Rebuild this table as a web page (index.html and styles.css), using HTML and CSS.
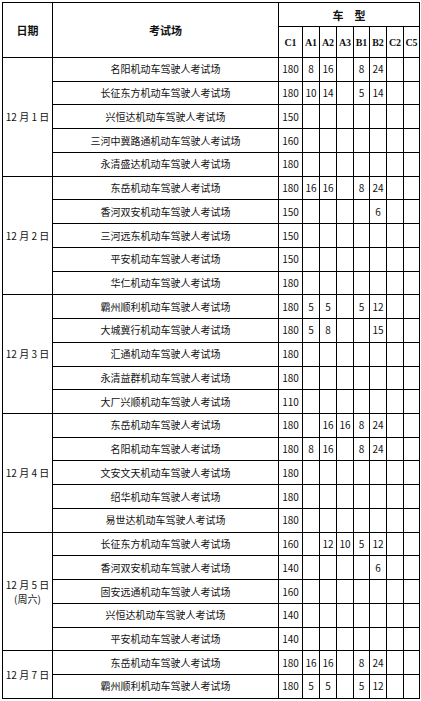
FILE: index.html
```html
<!DOCTYPE html>
<html lang="zh-CN">
<head>
<meta charset="utf-8">
<title>考试场安排</title>
<link rel="stylesheet" href="styles.css">
</head>
<body>
<table class="sched">
  <colgroup>
    <col class="c-date"><col class="c-venue"><col class="c-c1">
    <col class="c-n"><col class="c-n"><col class="c-n"><col class="c-n16"><col class="c-n"><col class="c-n"><col class="c-n16">
  </colgroup>
  <thead>
    <tr class="h1">
      <th rowspan="2" class="hz">日期</th>
      <th rowspan="2" class="hz">考试场</th>
      <th colspan="8" class="hz">车　型</th>
    </tr>
    <tr class="h2">
      <th class="code">C1</th><th class="code">A1</th><th class="code">A2</th><th class="code">A3</th><th class="code">B1</th><th class="code">B2</th><th class="code">C2</th><th class="code">C5</th>
    </tr>
  </thead>
  <tbody>
    <tr><td rowspan="5" class="date">12 月 1 日</td><td class="venue">名阳机动车驾驶人考试场</td><td>180</td><td>8</td><td>16</td><td></td><td>8</td><td>24</td><td></td><td></td></tr>
    <tr><td class="venue">长征东方机动车驾驶人考试场</td><td>180</td><td>10</td><td>14</td><td></td><td>5</td><td>14</td><td></td><td></td></tr>
    <tr><td class="venue">兴恒达机动车驾驶人考试场</td><td>150</td><td></td><td></td><td></td><td></td><td></td><td></td><td></td></tr>
    <tr><td class="venue">三河中冀路通机动车驾驶人考试场</td><td>160</td><td></td><td></td><td></td><td></td><td></td><td></td><td></td></tr>
    <tr><td class="venue">永清盛达机动车驾驶人考试场</td><td>180</td><td></td><td></td><td></td><td></td><td></td><td></td><td></td></tr>

    <tr><td rowspan="5" class="date">12 月 2 日</td><td class="venue">东岳机动车驾驶人考试场</td><td>180</td><td>16</td><td>16</td><td></td><td>8</td><td>24</td><td></td><td></td></tr>
    <tr><td class="venue">香河双安机动车驾驶人考试场</td><td>150</td><td></td><td></td><td></td><td></td><td>6</td><td></td><td></td></tr>
    <tr><td class="venue">三河远东机动车驾驶人考试场</td><td>150</td><td></td><td></td><td></td><td></td><td></td><td></td><td></td></tr>
    <tr><td class="venue">平安机动车驾驶人考试场</td><td>150</td><td></td><td></td><td></td><td></td><td></td><td></td><td></td></tr>
    <tr><td class="venue">华仁机动车驾驶人考试场</td><td>180</td><td></td><td></td><td></td><td></td><td></td><td></td><td></td></tr>

    <tr><td rowspan="5" class="date">12 月 3 日</td><td class="venue">霸州顺利机动车驾驶人考试场</td><td>180</td><td>5</td><td>5</td><td></td><td>5</td><td>12</td><td></td><td></td></tr>
    <tr><td class="venue">大城冀行机动车驾驶人考试场</td><td>180</td><td>5</td><td>8</td><td></td><td></td><td>15</td><td></td><td></td></tr>
    <tr><td class="venue">汇通机动车驾驶人考试场</td><td>180</td><td></td><td></td><td></td><td></td><td></td><td></td><td></td></tr>
    <tr><td class="venue">永清益群机动车驾驶人考试场</td><td>180</td><td></td><td></td><td></td><td></td><td></td><td></td><td></td></tr>
    <tr><td class="venue">大厂兴顺机动车驾驶人考试场</td><td>110</td><td></td><td></td><td></td><td></td><td></td><td></td><td></td></tr>

    <tr><td rowspan="5" class="date">12 月 4 日</td><td class="venue">东岳机动车驾驶人考试场</td><td>180</td><td></td><td>16</td><td>16</td><td>8</td><td>24</td><td></td><td></td></tr>
    <tr><td class="venue">名阳机动车驾驶人考试场</td><td>180</td><td>8</td><td>16</td><td></td><td>8</td><td>24</td><td></td><td></td></tr>
    <tr><td class="venue">文安文天机动车驾驶人考试场</td><td>180</td><td></td><td></td><td></td><td></td><td></td><td></td><td></td></tr>
    <tr><td class="venue">绍华机动车驾驶人考试场</td><td>180</td><td></td><td></td><td></td><td></td><td></td><td></td><td></td></tr>
    <tr><td class="venue">易世达机动车驾驶人考试场</td><td>180</td><td></td><td></td><td></td><td></td><td></td><td></td><td></td></tr>

    <tr><td rowspan="5" class="date">12 月 5 日<br>(周六)</td><td class="venue">长征东方机动车驾驶人考试场</td><td>160</td><td></td><td>12</td><td>10</td><td>5</td><td>12</td><td></td><td></td></tr>
    <tr><td class="venue">香河双安机动车驾驶人考试场</td><td>140</td><td></td><td></td><td></td><td></td><td>6</td><td></td><td></td></tr>
    <tr><td class="venue">固安远通机动车驾驶人考试场</td><td>160</td><td></td><td></td><td></td><td></td><td></td><td></td><td></td></tr>
    <tr><td class="venue">兴恒达机动车驾驶人考试场</td><td>140</td><td></td><td></td><td></td><td></td><td></td><td></td><td></td></tr>
    <tr><td class="venue">平安机动车驾驶人考试场</td><td>140</td><td></td><td></td><td></td><td></td><td></td><td></td><td></td></tr>

    <tr><td rowspan="2" class="date">12 月 7 日</td><td class="venue">东岳机动车驾驶人考试场</td><td>180</td><td>16</td><td>16</td><td></td><td>8</td><td>24</td><td></td><td></td></tr>
    <tr><td class="venue">霸州顺利机动车驾驶人考试场</td><td>180</td><td>5</td><td>5</td><td></td><td>5</td><td>12</td><td></td><td></td></tr>
  </tbody>
</table>
</body>
</html>
```
FILE: styles.css
```css
html, body {
  margin: 0;
  padding: 0;
  background: #ffffff;
}

body {
  padding: 2px 0 0 2px;
  font-family: "Noto Sans CJK SC", "Noto Sans", sans-serif;
  color: #111111;
}

.sched {
  border-collapse: collapse;
  table-layout: fixed;
  width: 418px;
}

.c-date { width: 50px; }
.c-venue { width: 226px; }
.c-c1 { width: 24px; }
.c-n { width: 17px; }
.c-n16 { width: 16px; }

.sched th,
.sched td {
  border: 1px solid #000000;
  padding: 0;
  text-align: center;
  vertical-align: middle;
  overflow: hidden;
  white-space: nowrap;
}

.sched td {
  font-size: 10px;
  line-height: 14px;
}

.h1 { height: 24px; }
.h2 { height: 31px; }
.sched tbody tr { height: 23.74px; }

.hz {
  font-size: 11px;
  font-weight: bold;
  line-height: 14px;
}

.code {
  font-family: "Liberation Serif", "Times New Roman", serif;
  font-size: 10px;
  font-weight: bold;
}

.date {
  white-space: normal;
}
```
